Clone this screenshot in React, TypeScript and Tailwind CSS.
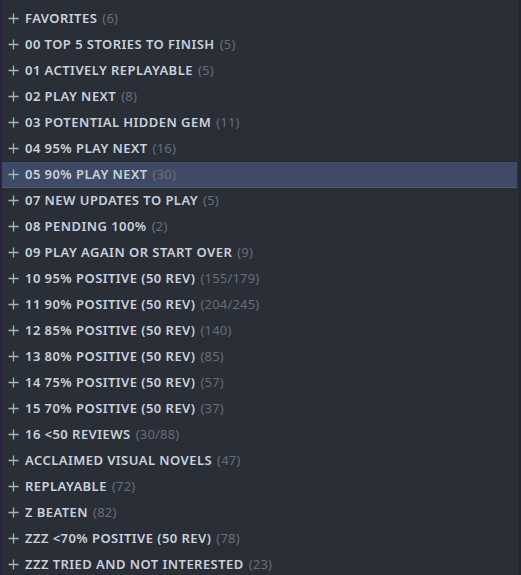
const rows: [string, string][] = [
  ["FAVORITES", "(6)"],
  ["00 TOP 5 STORIES TO FINISH", "(5)"],
  ["01 ACTIVELY REPLAYABLE", "(5)"],
  ["02 PLAY NEXT", "(8)"],
  ["03 POTENTIAL HIDDEN GEM", "(11)"],
  ["04 95% PLAY NEXT", "(16)"],
  ["05 90% PLAY NEXT", "(30)"],
  ["07 NEW UPDATES TO PLAY", "(5)"],
  ["08 PENDING 100%", "(2)"],
  ["09 PLAY AGAIN OR START OVER", "(9)"],
  ["10 95% POSITIVE (50 REV)", "(155/179)"],
  ["11 90% POSITIVE (50 REV)", "(204/245)"],
  ["12 85% POSITIVE (50 REV)", "(140)"],
  ["13 80% POSITIVE (50 REV)", "(85)"],
  ["14 75% POSITIVE (50 REV)", "(57)"],
  ["15 70% POSITIVE (50 REV)", "(37)"],
  ["16 <50 REVIEWS", "(30/88)"],
  ["ACCLAIMED VISUAL NOVELS", "(47)"],
  ["REPLAYABLE", "(72)"],
  ["Z BEATEN", "(82)"],
  ["ZZZ <70% POSITIVE (50 REV)", "(78)"],
  ["ZZZ TRIED AND NOT INTERESTED", "(23)"],
];

const Plus = () => (
  <svg width="11" height="11" viewBox="0 0 11 11" className="shrink-0">
    <path d="M5.5 0.5v10M0.5 5.5h10" stroke="#aab3c0" strokeWidth="1.3" />
  </svg>
);

export default function App() {
  return (
    <div className="w-[521px] h-[575px] overflow-hidden bg-[#2a2e37] flex">
      <div className="w-[2px] bg-[#2d2242] shrink-0" />
      <div className="flex-1 flex flex-col pt-[6px] pr-[2px] font-['Noto_Sans',sans-serif]">
        {rows.map(([name, count], i) => (
          <div
            key={i}
            className={
              "h-[26px] shrink-0 flex items-center pl-[6px] border-b " +
              (i === 6
                ? "bg-[#3e4a66] border-[#4d5a78]"
                : "border-[#282b33]")
            }
          >
            <Plus />
            <span className="ml-[6px] text-[13px] font-semibold tracking-[0.45px] text-[#c9d2de] whitespace-nowrap">
              {name}
            </span>
            <span className="ml-[5px] text-[13px] tracking-[0.2px] text-[#676e7a] whitespace-nowrap">
              {count}
            </span>
          </div>
        ))}
      </div>
      <div className="w-[2px] bg-[#23262d] shrink-0" />
    </div>
  );
}
